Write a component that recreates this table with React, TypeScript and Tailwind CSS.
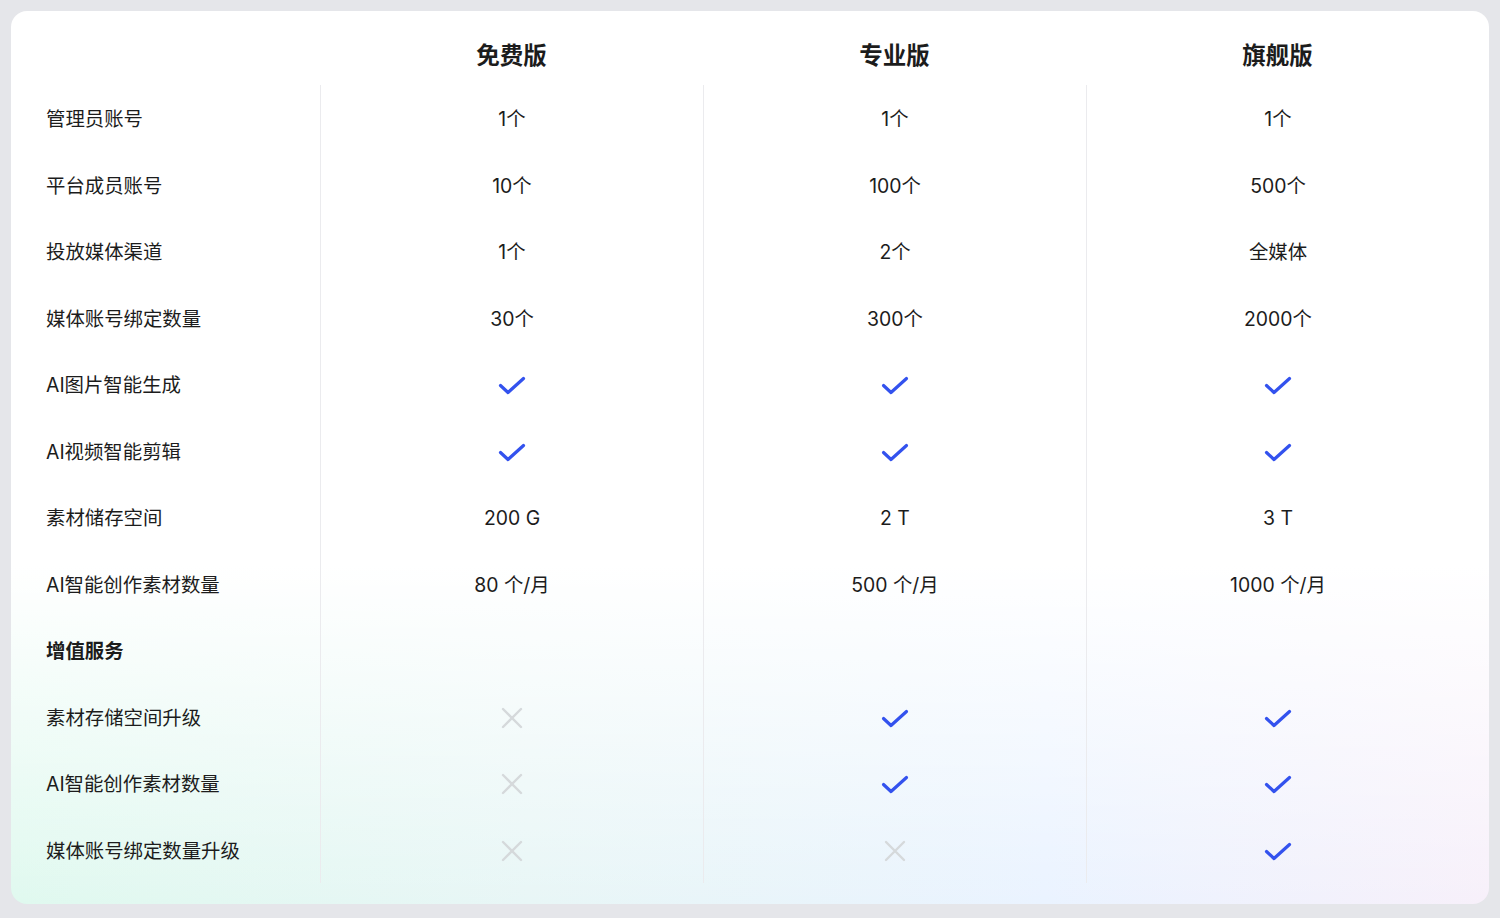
import { ReactNode } from "react";

type Cell = string | "check" | "cross";

const plans = ["免费版", "专业版", "旗舰版"];

const rows: { label: string; bold?: boolean; values: Cell[] }[] = [
  { label: "管理员账号", values: ["1个", "1个", "1个"] },
  { label: "平台成员账号", values: ["10个", "100个", "500个"] },
  { label: "投放媒体渠道", values: ["1个", "2个", "全媒体"] },
  { label: "媒体账号绑定数量", values: ["30个", "300个", "2000个"] },
  { label: "AI图片智能生成", values: ["check", "check", "check"] },
  { label: "AI视频智能剪辑", values: ["check", "check", "check"] },
  { label: "素材储存空间", values: ["200 G", "2 T", "3 T"] },
  { label: "AI智能创作素材数量", values: ["80 个/月", "500 个/月", "1000 个/月"] },
  { label: "增值服务", bold: true, values: ["", "", ""] },
  { label: "素材存储空间升级", values: ["cross", "check", "check"] },
  { label: "AI智能创作素材数量", values: ["cross", "check", "check"] },
  { label: "媒体账号绑定数量升级", values: ["cross", "cross", "check"] },
];

const Check = () => (
  <svg width="28" height="20" viewBox="0 0 28 20" fill="none" className="mt-[1px]">
    <path
      d="M2.5 9.5 L10 16.5 L25.5 2.5"
      stroke="#3352ee"
      strokeWidth="3.2"
      strokeLinecap="round"
      strokeLinejoin="round"
    />
  </svg>
);

const Cross = () => (
  <svg width="22" height="22" viewBox="0 0 22 22" fill="none" className="-mt-[1px]">
    <path
      d="M2 2 L20 20 M20 2 L2 20"
      stroke="#d5d9db"
      strokeWidth="2.4"
      strokeLinecap="round"
    />
  </svg>
);

const renderCell = (v: Cell): ReactNode => {
  if (v === "check") return <Check />;
  if (v === "cross") return <Cross />;
  return v;
};

export default function App() {
  return (
    <div
      className="h-[918px] w-[1500px] bg-[#e5e6ea] pl-[11px] pt-[11px] text-[#1c1c1c]"
      style={{ fontFamily: 'Inter, "Noto Sans CJK SC", sans-serif' }}
    >
      <div className="w-[1478px] h-[893px] rounded-[16px] pr-[20px] pb-[21px] bg-[linear-gradient(180deg,#ffffff_62%,rgba(255,255,255,0)_100%),linear-gradient(90deg,#e0f9ef_0%,#e8f6f6_35%,#eaf3ff_70%,#f7f0fa_100%)]">
        <div className="grid grid-cols-[309px_383px_383px_383px] h-[74px]">
          <div />
          {plans.map((p) => (
            <div key={p} className="flex items-end justify-center pb-[14px]">
              <span className="text-[23.5px] font-bold leading-[30px]">{p}</span>
            </div>
          ))}
        </div>

        <div className="grid grid-cols-[309px_383px_383px_383px]">
          <div className="flex flex-col pl-[35px]">
            {rows.map((r, i) => (
              <div
                key={i}
                className={`h-[66.5px] flex items-center pt-[3px] text-[19.4px] ${
                  r.bold ? "font-bold" : ""
                }`}
              >
                {r.label}
              </div>
            ))}
          </div>
          {plans.map((p, c) => (
            <div key={p} className="flex flex-col border-l border-[#ebebee]">
              {rows.map((r, i) => (
                <div
                  key={i}
                  className="h-[66.5px] flex items-center justify-center pt-[3px] text-[19.4px]"
                >
                  {renderCell(r.values[c])}
                </div>
              ))}
            </div>
          ))}
        </div>
      </div>
    </div>
  );
}
